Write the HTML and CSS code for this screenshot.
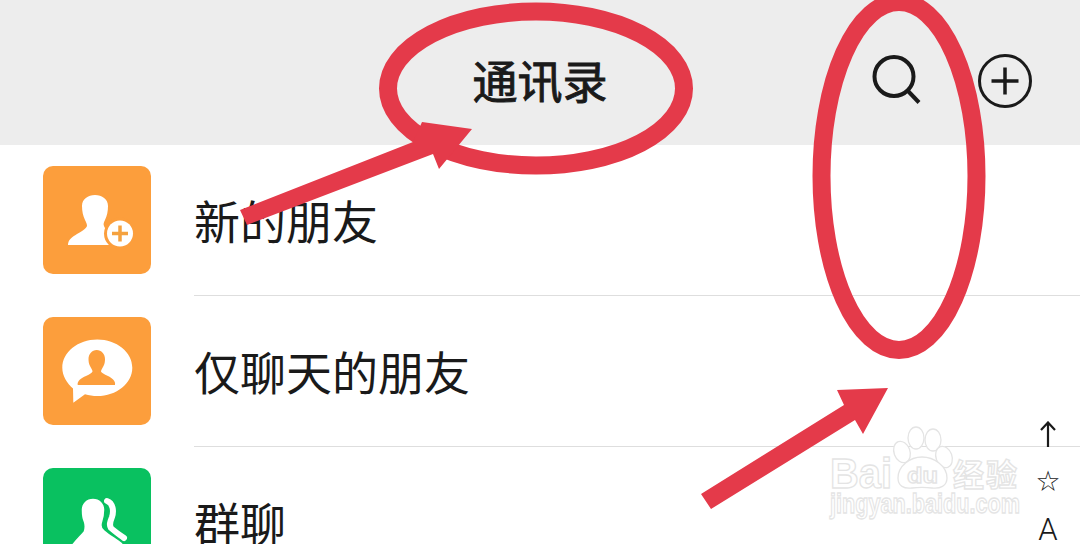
FILE: index.html
```html
<!DOCTYPE html>
<html lang="zh-CN">
<head>
    <meta charset="UTF-8">
    <meta name="viewport" content="width=device-width, initial-scale=1.0">
    <title>通讯录</title>
    <link rel="stylesheet" href="styles.css">
</head>
<body>

    <div class="page">
        <header class="top-bar">
            <span></span>
            <h1 class="top-title">通讯录</h1>
            <div class="top-actions">
                <svg class="icon-search" viewBox="0 0 50 52">
                    <circle cx="22" cy="21.5" r="19.5" fill="none" stroke="#1a1a1a" stroke-width="4"/>
                    <path d="M36 36 L47 47.5" fill="none" stroke="#1a1a1a" stroke-width="4"/>
                </svg>
                <svg class="icon-add" viewBox="0 0 54 54">
                    <circle cx="27" cy="27" r="25.5" fill="none" stroke="#1a1a1a" stroke-width="3"/>
                    <path d="M13.5 27 H40.5 M27 13.5 V40.5" fill="none" stroke="#1a1a1a" stroke-width="3.5"/>
                </svg>
            </div>
        </header>

        <ul class="contact-list">
            <li class="contact-row">
                <div class="contact-icon orange">
                    <svg viewBox="0 0 108 108">
                        <path fill="#fff" d="M25 79 C25 74 29 71 34 68 C39 65 43 63 44 60 C44 58 43 56 42 54 C40 50 39 45 39 40 C39 33 45 29 52 29 C59 29 65 33 65 40 C65 45 64 50 62 54 C61 56 60 58 61 60 C62 63 66 66 72 69 L72 79 Z"/>
                        <circle cx="77" cy="67.5" r="16" fill="#fc9e3c"/>
                        <circle cx="77" cy="67.5" r="13" fill="#fff"/>
                        <path d="M69 67.5 H85 M77 59.5 V75.5" fill="none" stroke="#f5a23f" stroke-width="3.5"/>
                    </svg>
                </div>
                <div class="contact-name">新的朋友</div>
            </li>
            <li class="contact-row">
                <div class="contact-icon orange">
                    <svg viewBox="0 0 108 108">
                        <path fill="#fff" d="M54.3 22.4 C73.6 22.4 89.3 35 89.3 50.7 C89.3 66.4 73.6 79 54.3 79 C50 79 46 78.4 42 77.2 L30.3 85.7 L30 71.5 C24 66 19.3 59 19.3 50.7 C19.3 35 35 22.4 54.3 22.4 Z"/>
                        <path fill="#fc9e3c" d="M34.7 68 C34 64 38 61 43 59 C47 57 49 56 49.5 54.5 C49.5 53 48 51 47 49 C46 47 45.5 45 45.5 42 C45.5 37 49 33 53.7 33 C58.4 33 62 37 62 42 C62 45 61.5 47 60.5 49 C59.5 51 58 53 58 54.5 C58.5 56 61 57 65 59 C69 61 73 64 72 68 Z"/>
                    </svg>
                </div>
                <div class="contact-name">仅聊天的朋友</div>
            </li>
            <li class="contact-row">
                <div class="contact-icon green">
                    <svg viewBox="0 0 108 108">
                        <path fill="none" stroke="#fff" stroke-width="6" stroke-linecap="round" d="M64 33 C70 35 71 43 69 49 C67 54 66 57 68 60 C71 63 77 67 81 70"/>
                        <path fill="#fff" stroke="#09c160" stroke-width="1.5" d="M22 92 C24 78 32 72 40 63 C41 60 41 57 40 54 C38 50 38 46 38 42 C38 35 43 30 50 30 C57 30 62 35 62 42 C62 46 61 51 60 54 C59 57 59 60 62 62 C68 67 74 70 80 75 L82 92 Z"/>
                    </svg>
                </div>
                <div class="contact-name">群聊</div>
            </li>
        </ul>

        <div class="side-index">
            <span class="index-item">
                <svg class="index-arrow" viewBox="0 0 16 26">
                    <path d="M8 26 V1.5 M1 9 L8 1.5 L15 9" fill="none" stroke="#1a1a1a" stroke-width="2.2"/>
                </svg>
            </span>
            <span class="index-item index-star">☆</span>
            <span class="index-item index-letter">A</span>
        </div>

        <!-- baidu watermark -->
        <svg class="watermark" viewBox="0 0 1080 544">
            <ellipse cx="902" cy="452" rx="8" ry="11" transform="rotate(-20 902 452)"/>
            <ellipse cx="916" cy="438" rx="8" ry="11"/>
            <ellipse cx="933" cy="440" rx="8" ry="11"/>
            <ellipse cx="944" cy="457" rx="8" ry="11" transform="rotate(-20 944 457)"/>
            <path d="M898 478 C898 466 910 457 922 457 C934 457 947 466 947 478 C947 486 940 489 932 488 C925 487 919 487 912 488 C904 489 898 486 898 478 Z"/>
            <text class="wm-latin" x="830" y="488" textLength="62" lengthAdjust="spacingAndGlyphs">Bai</text>
            <text class="wm-small" x="907" y="483" textLength="31" lengthAdjust="spacingAndGlyphs">du</text>
            <text class="wm-cjk" x="953" y="486" textLength="64">经验</text>
            <text class="wm-url" x="830" y="513" textLength="190" lengthAdjust="spacingAndGlyphs">jingyan.baidu.com</text>
        </svg>

        <!-- red marks drawn on top of the screenshot -->
        <svg class="marks" viewBox="0 0 1080 544">
            <ellipse class="mark-ring" cx="536" cy="88.5" rx="148" ry="77"/>
            <ellipse class="mark-ring" cx="899" cy="176" rx="77.5" ry="174"/>
            <polygon class="mark-arrow" points="422,122 472,129 439,169 433,154 247,225 240,210 413,142"/>
            <polygon class="mark-arrow" points="837,390 888,388 863,434 855,420 711,509 701,494 844,405"/>
        </svg>
    </div>

</body>
</html>
```

FILE: styles.css
```css
* {
    box-sizing: border-box;
}

body {
    margin: 0;
    background: #fff;
    font-family: "Liberation Sans", "Noto Sans CJK SC", sans-serif;
    color: #1a1a1a;
}

.page {
    position: relative;
    width: 1080px;
    height: 544px;
    overflow: hidden;
}

.top-bar {
    display: grid;
    grid-template-columns: 1fr auto 1fr;
    align-items: center;
    height: 145px;
    padding-top: 21px;
    background: #ededed;
}

.top-title {
    margin: 0;
    font-size: 45px;
    font-weight: 400;
    -webkit-text-stroke: 0.9px #1a1a1a;
    line-height: 1;
}

.top-actions {
    display: flex;
    justify-content: flex-end;
    align-items: center;
    gap: 56px;
    margin-top: -4px;
    padding-right: 48px;
}

.icon-search {
    width: 50px;
    height: 52px;
}

.icon-add {
    width: 54px;
    height: 54px;
}

.contact-list {
    margin: 0;
    padding: 0;
    list-style: none;
}

.contact-row {
    display: flex;
    gap: 43px;
    padding-left: 43px;
    height: 151px;
}

.contact-icon {
    flex: none;
    width: 108px;
    height: 108px;
    margin-top: 21px;
    border-radius: 10px;
    overflow: hidden;
}

.contact-icon svg {
    display: block;
    width: 108px;
    height: 108px;
}

.contact-icon.orange {
    background: #fc9e3c;
}

.contact-icon.green {
    background: #09c160;
}

.contact-name {
    flex: 1;
    display: flex;
    align-items: center;
    padding-top: 5px;
    border-bottom: 1px solid #dedede;
    font-size: 46px;
    line-height: 1;
}

.side-index {
    position: absolute;
    top: 410px;
    right: 14px;
    width: 36px;
    display: flex;
    flex-direction: column;
    align-items: center;
}

.index-item {
    display: flex;
    align-items: center;
    justify-content: center;
    height: 48px;
    line-height: 48px;
}

.index-arrow {
    width: 16px;
    height: 26px;
}

.index-star {
    font-family: "DejaVu Sans", sans-serif;
    font-size: 28px;
}

.index-letter {
    font-family: Roboto, sans-serif;
    font-size: 31px;
    font-weight: 300;
}

.watermark,
.marks {
    position: absolute;
    top: 0;
    left: 0;
    width: 1080px;
    height: 544px;
}

.watermark ellipse,
.watermark path,
.watermark text {
    fill: #fff;
    stroke: #e4e4e4;
    stroke-width: 1.3;
}

.wm-latin {
    font-size: 42px;
    font-weight: 700;
}

.wm-small {
    font-size: 22px;
    font-weight: 700;
}

.wm-cjk {
    font-size: 31px;
    font-weight: 700;
}

.wm-url {
    font-size: 28px;
    font-weight: 700;
}

.mark-ring {
    fill: none;
    stroke: #e43a4a;
    stroke-width: 18;
}

.mark-arrow {
    fill: #e43a4a;
}
```
